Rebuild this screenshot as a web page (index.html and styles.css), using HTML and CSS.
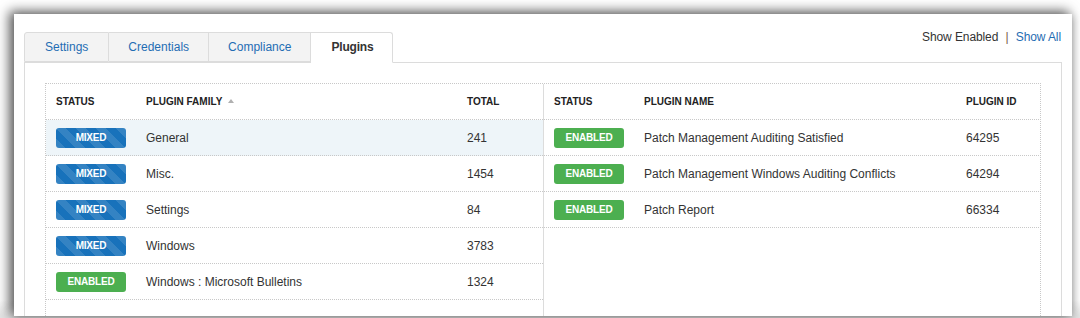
FILE: index.html
```html
<!DOCTYPE html>
<html>
<head>
<meta charset="utf-8">
<link rel="stylesheet" href="styles.css">
</head>
<body>
<div class="window">
  <div class="topbar">
    <ul class="tabs">
      <li class="tab first">Settings</li>
      <li class="tab">Credentials</li>
      <li class="tab">Compliance</li>
      <li class="tab active">Plugins</li>
    </ul>
    <div class="filters">
      <span class="filter-current">Show Enabled</span>
      <span class="sep">|</span>
      <span class="filter-link">Show All</span>
    </div>
  </div>
  <div class="panel">
    <div class="box">
      <div class="side left">
        <div class="row head"><div>STATUS</div><div>PLUGIN FAMILY <span class="caret"></span></div><div>TOTAL</div></div>
        <div class="row selected"><div><span class="badge mixed">MIXED</span></div><div>General</div><div>241</div></div>
        <div class="row"><div><span class="badge mixed">MIXED</span></div><div>Misc.</div><div>1454</div></div>
        <div class="row"><div><span class="badge mixed">MIXED</span></div><div>Settings</div><div>84</div></div>
        <div class="row"><div><span class="badge mixed">MIXED</span></div><div>Windows</div><div>3783</div></div>
        <div class="row"><div><span class="badge enabled">ENABLED</span></div><div>Windows : Microsoft Bulletins</div><div>1324</div></div>
      </div>
      <div class="side right">
        <div class="row head"><div>STATUS</div><div>PLUGIN NAME</div><div>PLUGIN ID</div></div>
        <div class="row"><div><span class="badge enabled">ENABLED</span></div><div>Patch Management Auditing Satisfied</div><div>64295</div></div>
        <div class="row"><div><span class="badge enabled">ENABLED</span></div><div>Patch Management Windows Auditing Conflicts</div><div>64294</div></div>
        <div class="row"><div><span class="badge enabled">ENABLED</span></div><div>Patch Report</div><div>66334</div></div>
      </div>
    </div>
  </div>
</div>
</body>
</html>
```
FILE: styles.css
```css
html, body {
  margin: 0;
  padding: 0;
  height: 318px;
  overflow: hidden;
}
body {
  padding: 14px 0 0 14px;
  box-sizing: border-box;
  background: linear-gradient(to bottom, #ffffff 0, #ffffff 300px, #e4e4e4 316px);
  font-family: "Liberation Sans", Arial, sans-serif;
  font-size: 12px;
  color: #333;
}
.window {
  width: 1058px;
  height: 302px;
  background: #fff;
  box-sizing: border-box;
  padding: 18px 10px 0 10px;
  display: flex;
  flex-direction: column;
  overflow: hidden;
  box-shadow: -4px -2px 11px 1px rgba(0,0,0,0.62), 2px 2px 8px rgba(0,0,0,0.15);
}
.topbar {
  display: flex;
  justify-content: space-between;
  align-items: flex-start;
}
.tabs {
  list-style: none;
  margin: 0 0 -1px 0;
  padding: 0;
  display: flex;
  position: relative;
  z-index: 1;
}
.tab {
  height: 30px;
  box-sizing: border-box;
  padding: 0 19px;
  line-height: 29px;
  background: #f3f3f3;
  border: 1px solid #dcdcdc;
  border-left: none;
  color: #1f6db3;
  white-space: nowrap;
}
.tab.first {
  border-left: 1px solid #dcdcdc;
  border-top-left-radius: 3px;
  padding: 0 20px;
}
.tab.active {
  background: #fff;
  color: #333;
  font-weight: bold;
  border-bottom-color: #fff;
  border-top-right-radius: 3px;
  height: 31px;
  padding: 0 19px 0 20px;
  letter-spacing: -0.2px;
}
.filters {
  margin-top: -2px;
  line-height: 14px;
  padding-right: 1px;
  white-space: nowrap;
  letter-spacing: -0.1px;
}
.filter-current { color: #333; }
.sep { color: #7a5a4a; margin: 0 4px; }
.filter-link { color: #1f6db3; }

.panel {
  flex: 1;
  border: 1px solid #dcdcdc;
  border-bottom: none;
  padding: 20px 20px 0 20px;
  min-height: 0;
}
.box {
  border: 1px dotted #c8c8c8;
  border-bottom: none;
  display: flex;
  height: 400px;
}
.side {
  width: 497px;
}
.side.left {
  border-right: 1px solid #dcdcdc;
}
.row {
  display: grid;
  height: 36px;
  box-sizing: border-box;
  align-items: center;
  border-bottom: 1px dotted #c8c8c8;
  font-size: 12px;
  color: #333;
  white-space: nowrap;
}
.left .row { grid-template-columns: 90px 321px 86px; }
.right .row { grid-template-columns: 90px 322px 85px; }
.row > div {
  padding-left: 10px;
}
.row.head {
  font-size: 10px;
  font-weight: bold;
  color: #222;
}
.row.selected {
  background: #eef5f9;
}
.caret {
  display: inline-block;
  width: 0;
  height: 0;
  border-left: 3px solid transparent;
  border-right: 3px solid transparent;
  border-bottom: 4px solid #b0b0b0;
  margin-left: 3px;
  vertical-align: 2px;
}
.badge {
  display: block;
  width: 70px;
  height: 20px;
  line-height: 20px;
  border-radius: 3px;
  text-align: center;
  color: #fff;
  font-weight: bold;
  font-size: 10px;
  letter-spacing: -0.2px;
}
.badge.mixed {
  background-color: #1872bb;
  background-image: linear-gradient(45deg, rgba(255,255,255,0.12) 25%, transparent 25%, transparent 50%, rgba(255,255,255,0.12) 50%, rgba(255,255,255,0.12) 75%, transparent 75%, transparent);
  background-size: 20px 20px;
}
.badge.enabled {
  background: #4caf50;
}
```
